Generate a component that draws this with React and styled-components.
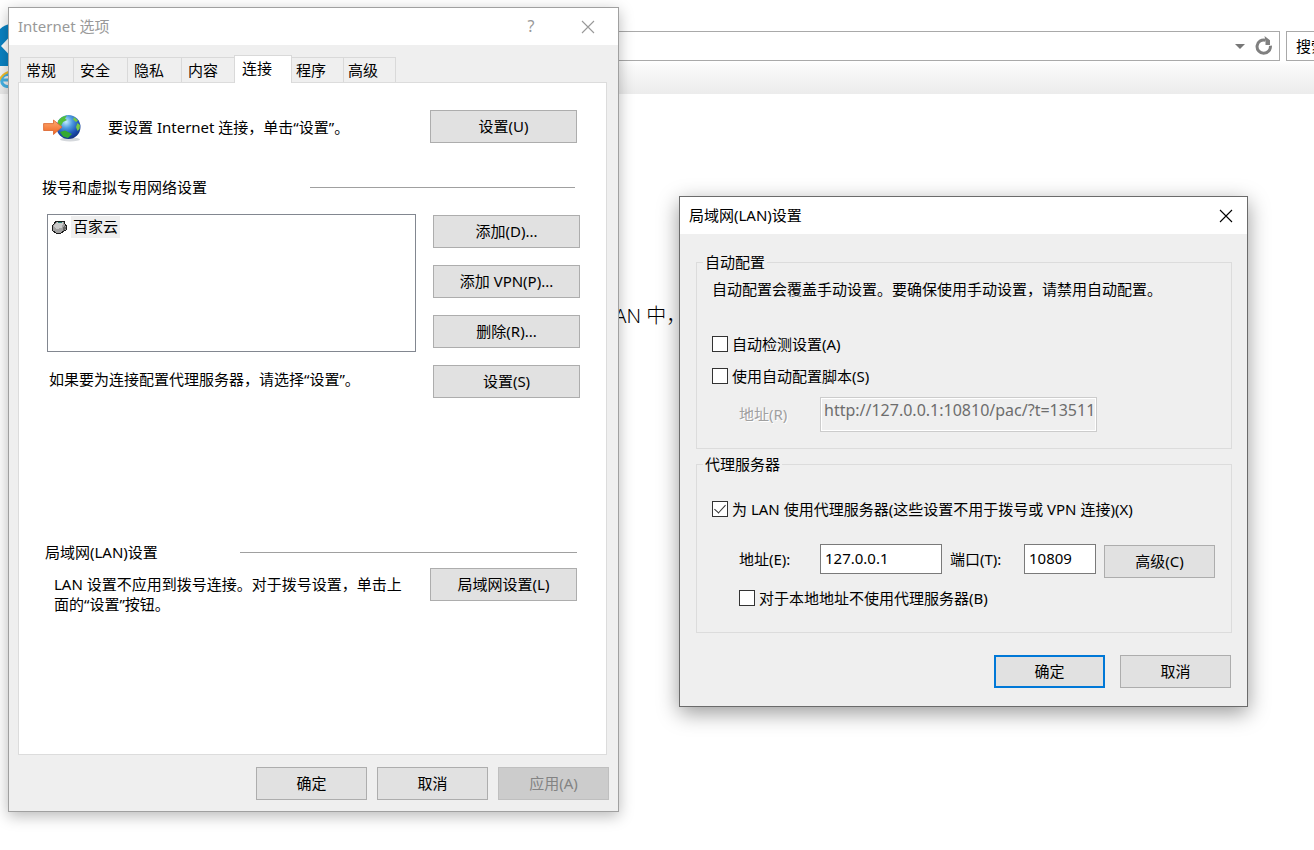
import React from 'react';
import styled, { createGlobalStyle, css } from 'styled-components';

const GlobalStyle = createGlobalStyle`
  * {
    box-sizing: border-box;
  }
  body {
    margin: 0;
    background: #fff;
    color: #000;
    font: 15px/20px "Noto Sans", "Noto Sans CJK SC", sans-serif;
  }
  button, input {
    font: inherit;
    color: inherit;
  }
  p, h2, h3 {
    margin: 0;
    font: inherit;
  }
`;

const tabs = ['常规', '安全', '隐私', '内容', '连接', '程序', '高级'];

const CloseIcon = () => (
  <svg width="14" height="14" viewBox="0 0 14 14" fill="none" stroke="currentColor" strokeWidth="1.1">
    <path d="M1 1l12 12M13 1L1 13" />
  </svg>
);

const RefreshIcon = () => (
  <svg width="18" height="20" viewBox="0 0 18 20" fill="none">
    <path d="M10.5 4.2A6.700 6.700 0 1 0 15.400 9.800" stroke="#808080" strokeWidth="3" />
    <path d="M9.500 0L15 4.200V9H10.500V5.500Z" fill="#808080" />
  </svg>
);

const GlobeIcon = () => (
  <svg width="40" height="30" viewBox="0 0 40 30">
    <defs>
      <radialGradient id="sea" cx="0.4" cy="0.28" r="0.75">
        <stop offset="0" stopColor="#c4ecff" />
        <stop offset="0.35" stopColor="#4d9be0" />
        <stop offset="0.75" stopColor="#1b4db0" />
        <stop offset="1" stopColor="#10307c" />
      </radialGradient>
      <linearGradient id="arrow" x1="0" y1="0" x2="0" y2="1">
        <stop offset="0" stopColor="#ffab72" />
        <stop offset="1" stopColor="#ee6420" />
      </linearGradient>
    </defs>
    <ellipse cx="28" cy="27.4" rx="10" ry="2" fill="#d5d8dc" />
    <circle cx="26.500" cy="15" r="12" fill="url(#sea)" />
    <path d="M16 9C18 6 21 4 25 3.500L23 6.500L25 8L21 10L19 14L16 12Z" fill="#52bf3a" />
    <path d="M32 5L36 8.500L34 10L31 7.500ZM35.500 11L38 13L37.500 17L35.500 19L34 15Z" fill="#78c943" />
    <path d="M18 20L23 18.500L30 22L26 26L21 24.500Z" fill="#35a832" />
    <path d="M1.600 11.600H11.500V8L20 15L11.500 22.500V18.500H1.600Z" fill="url(#arrow)" stroke="#d9622b" strokeWidth="0.8" />
  </svg>
);

const ModemIcon = () => (
  <svg width="17" height="16" viewBox="0 0 17 16" shapeRendering="crispEdges">
    <path d="M1 7L3 5L5 2H13L14 5L16 8L15 11L13 12L10 14H5L2 12L1 10Z" fill="#a0a0a0" stroke="#1c1c1c" />
    <path d="M3 7L6 3L12 3L11 9L5 10Z" fill="#cacaca" />
    <path d="M7 3.500H11" stroke="#28786e" />
    <path d="M12 9L14 6L15 9L12 12Z" fill="#666" />
  </svg>
);

const BackIcon = () => (
  <svg width="12" height="42" viewBox="0 0 12 42">
    <path d="M0 5C3 2 7 0 12 0V42H0Z" fill="#0a83c4" />
    <path d="M1 22L9 13.500V30.500Z" fill="#fff" />
  </svg>
);

const IeIcon = () => (
  <svg width="16" height="18" viewBox="0 0 16 18" fill="none">
    <path d="M13 13A6 6 0 1 1 13 8V10H1" stroke="#46b3e6" strokeWidth="3" />
    <path d="M-1 11C1 6 6 2 12 1" stroke="#f5bf2b" strokeWidth="2" />
  </svg>
);

const Check = ({ id, label, indent, checked }) => (
  <CheckRow $indent={indent}>
    <CheckBox id={id} type="checkbox" defaultChecked={checked} />
    <label htmlFor={id}>{label}</label>
  </CheckRow>
);

const App = () => {
  return (
    <Desktop>
      <GlobalStyle />
      <BrowserBar>
        <BackIcon />
        <AddressBar>
          <DropArrow />
          <RefreshIcon />
        </AddressBar>
        <SearchBox>搜索</SearchBox>
      </BrowserBar>
      <Favorites>
        <IeIcon />
      </Favorites>
      <PageText>LAN 中，</PageText>

      <OptionsWindow>
        <TitleBar $inactive>
          <WindowTitle>Internet 选项</WindowTitle>
          <TitleButton aria-label="帮助">?</TitleButton>
          <TitleButton aria-label="关闭"><CloseIcon /></TitleButton>
        </TitleBar>
        <OptionsBody>
          <TabList role="tablist">
            {tabs.map((tab) => (
              <Tab key={tab} role="tab" aria-selected={tab === '连接'} $active={tab === '连接'}>{tab}</Tab>
            ))}
          </TabList>
          <TabPanel role="tabpanel">
            <SetupRow>
              <GlobeIcon />
              <p>要设置 Internet 连接，单击“设置”。</p>
              <Button $wide>设置(U)</Button>
            </SetupRow>
            <SectionHead $rule={265}>拨号和虚拟专用网络设置</SectionHead>
            <DialRow>
              <DialList>
                <ConnectionList>
                  <Connection>
                    <ModemIcon />
                    <span>百家云</span>
                  </Connection>
                </ConnectionList>
                <ListHint>如果要为连接配置代理服务器，请选择“设置”。</ListHint>
              </DialList>
              <ButtonColumn>
                <Button $wide>添加(D)...</Button>
                <Button $wide>添加 VPN(P)...</Button>
                <Button $wide>删除(R)...</Button>
                <Button $wide>设置(S)</Button>
              </ButtonColumn>
            </DialRow>
            <LanSection>
              <SectionHead $rule={337}>局域网(LAN)设置</SectionHead>
              <LanRow>
                <p>LAN 设置不应用到拨号连接。对于拨号设置，单击上面的“设置”按钮。</p>
                <Button $wide>局域网设置(L)</Button>
              </LanRow>
            </LanSection>
          </TabPanel>
          <OptionsFooter>
            <Button>确定</Button>
            <Button>取消</Button>
            <Button disabled>应用(A)</Button>
          </OptionsFooter>
        </OptionsBody>
      </OptionsWindow>

      <LanWindow>
        <TitleBar>
          <WindowTitle>局域网(LAN)设置</WindowTitle>
          <TitleButton aria-label="关闭"><CloseIcon /></TitleButton>
        </TitleBar>
        <LanBody>
          <Group>
            <legend>自动配置</legend>
            <GroupText>自动配置会覆盖手动设置。要确保使用手动设置，请禁用自动配置。</GroupText>
            <CheckStack>
              <Check id="detect" label="自动检测设置(A)" />
              <Check id="script" label="使用自动配置脚本(S)" />
            </CheckStack>
            <ScriptRow>
              <DisabledLabel htmlFor="script-url">地址(R)</DisabledLabel>
              <ScriptInput id="script-url" disabled defaultValue="http://127.0.0.1:10810/pac/?t=13511" />
            </ScriptRow>
          </Group>
          <Group $proxy>
            <legend>代理服务器</legend>
            <Check id="proxy" label="为 LAN 使用代理服务器(这些设置不用于拨号或 VPN 连接)(X)" checked />
            <ProxyRow>
              <label htmlFor="address">地址(E):</label>
              <TextInput id="address" defaultValue="127.0.0.1" />
              <label htmlFor="port">端口(T):</label>
              <TextInput id="port" defaultValue="10809" />
              <Button>高级(C)</Button>
            </ProxyRow>
            <Check id="bypass" label="对于本地地址不使用代理服务器(B)" indent />
          </Group>
          <LanFooter>
            <Button $primary>确定</Button>
            <Button>取消</Button>
          </LanFooter>
        </LanBody>
      </LanWindow>
    </Desktop>
  )
}

const Desktop = styled.main`
  position: relative;
  min-height: 100vh;
  overflow: hidden;
`;

/* browser behind the dialogs */

const BrowserBar = styled.header`
  display: flex;
  align-items: flex-end;
  height: 66px;
  background: linear-gradient(#fff 61px, #fafafa);
`;

const AddressBar = styled.div`
  display: flex;
  flex: 1;
  align-items: center;
  justify-content: flex-end;
  gap: 10px;
  height: 30px;
  margin: 0 6px 5px 0;
  padding-right: 6px;
  border: 1px solid #a9a9a9;
  background: #fff;
`;

const DropArrow = styled.span`
  border: 5px solid transparent;
  border-top-color: #777;
  border-bottom: 0;
`;

const SearchBox = styled.div`
  flex: none;
  width: 28px;
  height: 30px;
  margin-bottom: 5px;
  padding: 4px 0 0 9px;
  overflow: hidden;
  border: 1px solid #a9a9a9;
  border-right: 0;
  white-space: nowrap;
`;

const Favorites = styled.div`
  height: 28px;
  padding-top: 4px;
  background: linear-gradient(#fafafa, #ececec);
`;

const PageText = styled.p`
  padding: 207px 0 0 604px;
  font-size: 20px;
  font-weight: 300;
  line-height: 30px;
`;

/* windows */

const Window = styled.section`
  position: absolute;
  background: #efefef;
`;

const OptionsWindow = styled(Window)`
  top: 7px;
  left: 8px;
  width: 611px;
  border: 1px solid #a0a0a0;
  box-shadow: 0 4px 14px rgba(0, 0, 0, 0.28);
`;

const LanWindow = styled(Window)`
  top: 196px;
  left: 679px;
  width: 569px;
  border: 1px solid #6b6b6b;
  box-shadow: 0 6px 20px rgba(0, 0, 0, 0.4);
`;

const TitleBar = styled.div`
  display: flex;
  align-items: center;
  height: 37px;
  padding-left: 9px;
  background: #fff;
  color: ${({ $inactive }) => ($inactive ? '#999' : '#000')};
`;

const WindowTitle = styled.h2`
  flex: 1;
  padding-bottom: 2px;
`;

const TitleButton = styled.button`
  display: flex;
  align-items: center;
  justify-content: center;
  width: 42px;
  height: 36px;
  padding: 0;
  border: 0;
  background: none;

  &:not(:last-child) {
    width: 56px;
    padding-bottom: 2px;
    font-size: 16px;
  }

  & + & {
    width: 58px;
    margin-right: 1px;
  }
`;

const Button = styled.button`
  flex: none;
  width: ${({ $wide }) => ($wide ? '147px' : '111px')};
  height: 33px;
  padding: 0 0 2px;
  border: ${({ $primary }) => ($primary ? '2px solid #0078d7' : '1px solid #adadad')};
  background: #e1e1e1;

  &:disabled {
    border-color: #bfbfbf;
    background: #ccc;
    color: #838383;
  }
`;

/* Internet options */

const OptionsBody = styled.div`
  padding: 10px 9px 11px;
`;

const TabList = styled.div`
  display: flex;
  align-items: flex-end;
  height: 27px;
  padding-left: 2px;
`;

const Tab = styled.button`
  width: 54px;
  height: 25px;
  padding: 0 0 0 6px;
  border: 1px solid #d9d9d9;
  border-width: 1px 1px 0 0;
  background: #efefef;
  text-align: left;

  &:first-child {
    padding-left: 5px;
    border-left-width: 1px;
  }

  ${({ $active }) => $active && css`
    z-index: 1;
    width: 58px;
    height: 28px;
    padding: 0 0 3px 7px;
    margin: 0 0 -1px -2px;
    border-left-width: 1px;
    background: #fff;

    & ~ button {
      width: 52px;
      padding-left: 4px;
    }
  `}
`;

const TabPanel = styled.div`
  height: 673px;
  margin-right: 2px;
  padding: 27px 26px 0 23px;
  border: 1px solid #dcdcdc;
  background: #fff;
`;

const SetupRow = styled.div`
  display: flex;
  align-items: center;
  margin-right: 3px;

  p {
    flex: 1;
    margin-left: 26px;
  }
`;

const SectionHead = styled.h3`
  display: flex;
  align-items: center;
  justify-content: space-between;
  margin: 34px 5px 17px 0;

  &::after {
    content: '';
    width: ${({ $rule }) => $rule}px;
    height: 1px;
    background: #a0a0a0;
  }
`;

const DialRow = styled.div`
  display: flex;
  gap: 17px;
  padding-left: 5px;
`;

const DialList = styled.div`
  flex: 1;
`;

const ConnectionList = styled.ul`
  height: 138px;
  margin: 0;
  padding: 1px 3px;
  border: 1px solid #828790;
  list-style: none;
`;

const Connection = styled.li`
  display: flex;
  align-items: center;
  gap: 3px;

  span {
    padding: 0 2px 2px;
    background: #efefef;
  }
`;

const ListHint = styled.p`
  margin: 17px 0 0 2px;
`;

const ButtonColumn = styled.div`
  display: flex;
  flex-direction: column;
  gap: 17px;
  padding-top: 1px;
`;

const LanSection = styled.div`
  margin: 144px 3px 0 3px;

  h3 {
    margin: 0 0 6px;
  }
`;

const LanRow = styled.div`
  display: flex;
  justify-content: space-between;
  padding-left: 9px;

  p {
    width: 356px;
    padding-top: 6px;
  }
`;

const OptionsFooter = styled.div`
  display: flex;
  justify-content: flex-end;
  gap: 10px;
  margin: 12px 0 0;
`;

/* LAN settings */

const LanBody = styled.div`
  padding: 18px 15px 18px 16px;
`;

const Group = styled.fieldset`
  min-width: 0;
  margin: ${({ $proxy }) => ($proxy ? '5px 0 0' : '0')};
  padding: ${({ $proxy }) => ($proxy ? '25px 15px 24px' : '7px 15px 16px')};
  border: 1px solid #dcdcdc;

  legend {
    margin-left: -9px;
    padding: 0 2px;
  }
`;

const GroupText = styled.p`
  white-space: nowrap;
`;

const CheckStack = styled.div`
  display: grid;
  gap: 12px;
  margin-top: 35px;
`;

const CheckRow = styled.div`
  display: flex;
  align-items: center;
  gap: 4px;
  padding-left: ${({ $indent }) => ($indent ? '27px' : '0')};
  white-space: nowrap;
`;

const CheckBox = styled.input`
  display: grid;
  flex: none;
  justify-content: center;
  width: 16px;
  height: 16px;
  margin: 0;
  appearance: none;
  border: 1px solid #333;
  background: #fff;

  &:checked::after {
    content: '';
    width: 5px;
    height: 10px;
    border: solid #333;
    border-width: 0 1px 1px 0;
    transform: rotate(42deg);
  }
`;

const ScriptRow = styled.div`
  display: grid;
  grid-template-columns: 81px 277px;
  align-items: center;
  margin-top: 11px;
  padding-left: 27px;
`;

const DisabledLabel = styled.label`
  padding-bottom: 2px;
  color: #a0a0a0;
  text-shadow: 1px 1px #fff;
`;

const TextInput = styled.input`
  min-width: 0;
  height: 30px;
  padding: 0 3px 3px 4px;
  border: 1px solid #7a7a7a;
  border-radius: 0;
  background: #fff;
`;

const ScriptInput = styled(TextInput)`
  height: 35px;
  padding: 0 3px 9px;
  border-color: #ccc;
  background: #efefef;
  box-shadow: inset 0 0 0 1px #fff;
  color: #6d6d6d;
  font-size: 16px;
`;

const ProxyRow = styled.div`
  display: grid;
  grid-template-columns: 81px 122px 82px 72px 111px;
  margin: 25px 0 10px;
  padding-left: 27px;

  label {
    line-height: 30px;
  }
  label + input + label {
    padding-left: 8px;
  }
  button {
    margin: 1px 0 0 8px;
  }
`;

const LanFooter = styled.div`
  display: flex;
  justify-content: flex-end;
  gap: 15px;
  margin: 22px 1px 0 0;
`;

export default App
